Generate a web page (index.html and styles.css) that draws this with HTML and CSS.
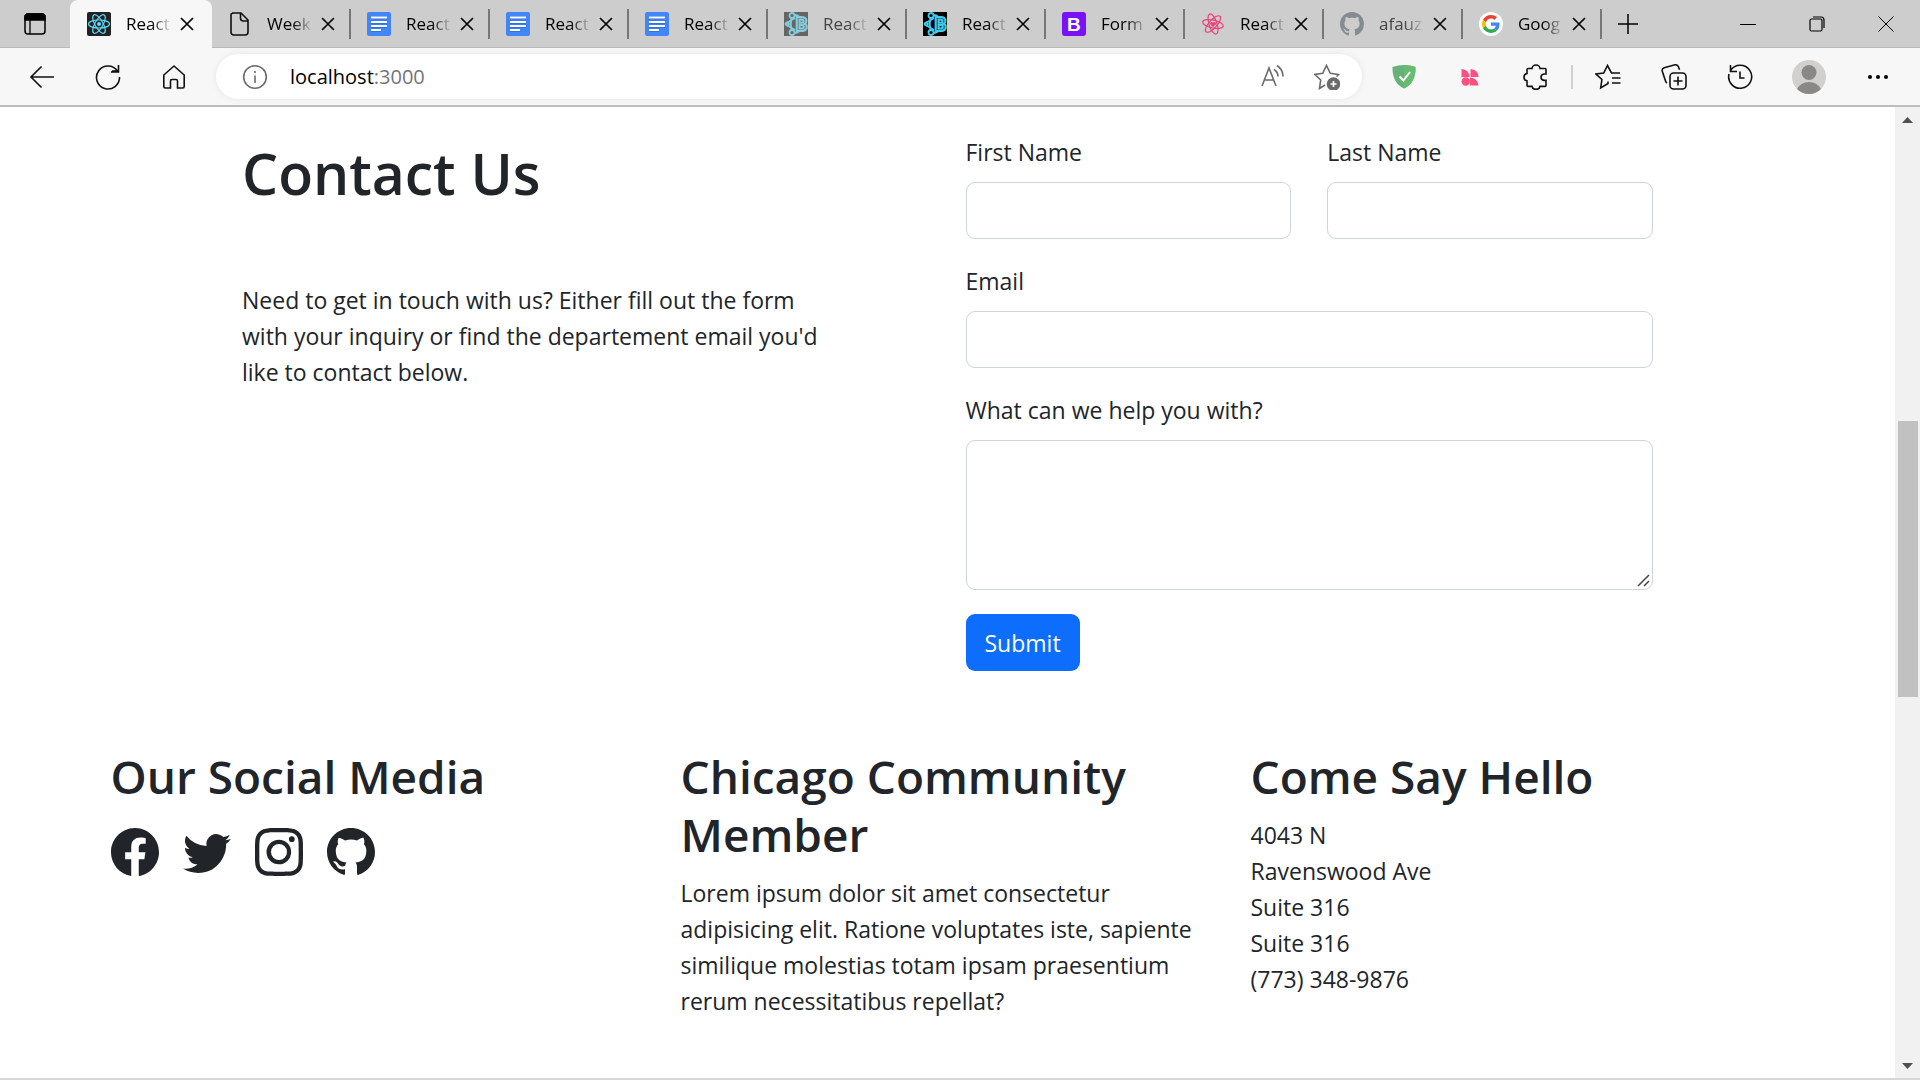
FILE: index.html
```html
<!DOCTYPE html>
<html lang="en">
<head>
<meta charset="utf-8">
<meta name="viewport" content="width=device-width, initial-scale=1">
<title>React App</title>
<link rel="stylesheet" href="styles.css">
</head>
<body>
<svg class="defs" aria-hidden="true">
  <symbol id="x" viewBox="0 0 14 14"><path d="M1 1l12 12M13 1L1 13" fill="none" stroke="currentColor" stroke-width="1.7"/></symbol>
  <symbol id="docs" viewBox="0 0 24 24"><rect width="24" height="24" rx="2" fill="#4285f4"/><path d="M4 5.7h16M4 10.2h16M4 14.200h16M4 18.200h10" stroke="#2a6be0" stroke-width="3"/><path d="M4 5.500h16M4 10h16M4 14h16M4 18h10" stroke="#fff" stroke-width="2.200"/></symbol>
  <symbol id="atom" viewBox="0 0 24 24"><g fill="none" stroke="currentColor" stroke-width="1.200"><ellipse cx="12" cy="12" rx="10.500" ry="4"/><ellipse cx="12" cy="12" rx="10.500" ry="4" transform="rotate(60 12 12)"/><ellipse cx="12" cy="12" rx="10.500" ry="4" transform="rotate(120 12 12)"/></g></symbol>
  <symbol id="rb" viewBox="0 0 24 24"><rect width="24" height="24"/><g fill="none" stroke="#41cbe8" stroke-width="1.800"><circle cx="3.500" cy="12" r="1.500"/><circle cx="8" cy="3.500" r="2.500"/><circle cx="8" cy="20.500" r="2.500"/><path d="M1 12L11 6M1 12l10 6M7.500 6c-1 4-1 8 0 12M10 3q4 0 5 2M10 21q4 0 5-2"/></g></symbol>
  <symbol id="github" viewBox="0 0 16 16"><path fill="currentColor" d="M8 0C3.580 0 0 3.580 0 8c0 3.540 2.290 6.530 5.470 7.590.4.070.550-.170.550-.380 0-.190-.010-.820-.010-1.490-2.010.370-2.530-.490-2.690-.940-.090-.230-.480-.940-.820-1.130-.280-.150-.680-.520-.010-.530.630-.010 1.080.580 1.230.820.720 1.210 1.870.870 2.330.660.070-.520.280-.870.510-1.070-1.780-.2-3.640-.890-3.640-3.950 0-.870.310-1.590.820-2.150-.080-.2-.360-1.020.080-2.120 0 0 .670-.210 2.200.820.640-.180 1.320-.270 2-.270s1.360.090 2 .270c1.530-1.040 2.200-.820 2.200-.820.440 1.100.160 1.920.080 2.120.510.560.820 1.270.820 2.150 0 3.070-1.870 3.750-3.650 3.950.290.250.540.730.540 1.480 0 1.070-.010 1.930-.010 2.200 0 .210.150.460.550.380A8.010 8.010 0 0 0 16 8c0-4.420-3.580-8-8-8z"/></symbol>
</svg>

<header class="browser">
  <div class="tabstrip">
    <button class="tab-actions" aria-label="Tab actions"><svg width="22" height="22" viewBox="0 0 22 22"><rect x="1" y="1" width="20" height="20" rx="3" fill="none" stroke="#000" stroke-width="1.500"/><path d="M1 7V4a3 3 0 0 1 3-3h14a3 3 0 0 1 3 3v3zM6 6v15" stroke="#000" stroke-width="1.300"/></svg></button>
    <nav class="tabs" aria-label="Open tabs">
      <div class="tab tab-active"><a href="#"><svg class="fav"><rect width="24" height="24" rx="2" fill="#222"/><use href="#atom" color="#61dafb"/><circle cx="12" cy="12" r="2" fill="#61dafb"/></svg><span>React</span></a><button aria-label="Close tab"><svg><use href="#x"/></svg></button></div>
      <div class="tab"><a href="#"><svg class="fav"><path d="M4 1h9l7 7v12q0 3-3 3H6q-3 0-3-3V3q0-2 3-2zM12.500 1v5q0 3 3 3H20" fill="none" stroke="#111" stroke-width="1.600"/></svg><span>Week</span></a><button aria-label="Close tab"><svg><use href="#x"/></svg></button></div>
      <div class="tab"><a href="#"><svg class="fav"><use href="#docs"/></svg><span>React</span></a><button aria-label="Close tab"><svg><use href="#x"/></svg></button></div>
      <div class="tab"><a href="#"><svg class="fav"><use href="#docs"/></svg><span>React</span></a><button aria-label="Close tab"><svg><use href="#x"/></svg></button></div>
      <div class="tab"><a href="#"><svg class="fav"><use href="#docs"/></svg><span>React</span></a><button aria-label="Close tab"><svg><use href="#x"/></svg></button></div>
      <div class="tab tab-sleep"><a href="#"><svg class="fav"><use href="#rb"/><text x="11" y="19" class="rb-letter">B</text></svg><span>React</span></a><button aria-label="Close tab"><svg><use href="#x"/></svg></button></div>
      <div class="tab"><a href="#"><svg class="fav"><use href="#rb"/><text x="11" y="19" class="rb-letter">B</text></svg><span>React</span></a><button aria-label="Close tab"><svg><use href="#x"/></svg></button></div>
      <div class="tab"><a href="#"><svg class="fav"><rect width="24" height="24" rx="3" fill="#7a12f8"/><text x="5" y="19" class="bs-letter">B</text></svg><span>Form</span></a><button aria-label="Close tab"><svg><use href="#x"/></svg></button></div>
      <div class="tab"><a href="#"><svg class="fav"><g transform="rotate(12 12 12)"><use href="#atom" color="#ec407a"/></g><path d="M12 15l-3-3q0-2 1.500-2T12 11q0-1 1.500-1T15 12z" fill="#ec407a"/></svg><span>React</span></a><button aria-label="Close tab"><svg><use href="#x"/></svg></button></div>
      <div class="tab tab-sleep"><a href="#"><svg class="fav fav-github"><use href="#github"/></svg><span>afauz</span></a><button aria-label="Close tab"><svg><use href="#x"/></svg></button></div>
      <div class="tab"><a href="#"><svg class="fav" viewBox="0 0 72 72"><circle cx="36" cy="36" r="36" fill="#fff"/><g transform="translate(9 9) scale(1.120)"><path fill="#ea4335" d="M24 9.500c3.540 0 6.710 1.220 9.210 3.600l6.850-6.850C35.900 2.380 30.470 0 24 0 14.620 0 6.510 5.380 2.560 13.220l7.980 6.190C12.430 13.720 17.740 9.500 24 9.500z"/><path fill="#4285f4" d="M46.980 24.550c0-1.570-.150-3.090-.380-4.550H24v9.020h12.940c-.580 2.960-2.260 5.480-4.780 7.180l7.730 6c4.510-4.180 7.090-10.360 7.090-17.650z"/><path fill="#fbbc05" d="M10.530 28.590c-.480-1.450-.760-2.990-.760-4.590s.270-3.140.760-4.590l-7.980-6.190C.920 16.460 0 20.120 0 24c0 3.880.920 7.540 2.560 10.780z"/><path fill="#34a853" d="M24 48c6.480 0 11.930-2.130 15.890-5.810l-7.730-6c-2.150 1.450-4.920 2.300-8.160 2.300-6.260 0-11.570-4.220-13.470-9.910l-7.980 6.190C6.510 42.620 14.620 48 24 48z"/></g></svg><span>Goog</span></a><button aria-label="Close tab"><svg><use href="#x"/></svg></button></div>
    </nav>
    <button class="new-tab" aria-label="New tab"><svg width="22" height="22" viewBox="0 0 22 22"><path d="M11 1v20M1 11h20" stroke="#000" stroke-width="1.500"/></svg></button>
    <div class="window-buttons">
      <button aria-label="Minimize"><svg width="16" height="16"><path d="M0 8.500h16" stroke="#000"/></svg></button>
      <button aria-label="Restore"><svg width="16" height="16" viewBox="0 0 16 16" fill="none" stroke="#000" stroke-width="1.200"><rect x="1" y="3" width="12" height="12" rx="1.500"/><path d="M4 1h8q3 0 3 3v8"/></svg></button>
      <button aria-label="Close window"><svg width="16" height="16"><path d="M.5.5l15 15M15.500.5l-15 15" stroke="#000"/></svg></button>
    </div>
  </div>

  <div class="toolbar">
    <button class="tool" aria-label="Back"><svg viewBox="0 0 26 26"><path d="M25 13H2M12.500 2.500L2 13l10.500 10.500"/></svg></button>
    <button class="tool" aria-label="Refresh"><svg viewBox="0 0 26 26"><path d="M24.500 13A11.500 11.500 0 1 1 22.500 7H17M23.500 1v7H16"/></svg></button>
    <button class="tool" aria-label="Home"><svg viewBox="0 0 26 26"><path d="M13 2L2.800 11v11.500q0 1.500 1.500 1.500H9.500v-7q0-1.500 1.500-1.500h4q1.500 0 1.500 1.500v7h5.200q1.500 0 1.500-1.500V11z"/></svg></button>
    <div class="omnibox">
      <button class="site-info" aria-label="Site information"><svg viewBox="0 0 26 26"><circle cx="13" cy="13" r="11.300"/><path d="M13 11.500v7.500M13 7v2"/></svg></button>
      <div class="url"><span>localhost</span>:3000</div>
      <button class="omni-tool" aria-label="Read aloud"><svg viewBox="0 0 26 26"><path d="M2 22L9 4l7 18M4.500 16h9M14 5.500q4 2.500 4 7M17 1.500q6 4 6 11"/></svg></button>
      <button class="omni-tool" aria-label="Add to favorites"><svg viewBox="0 0 26 26"><path d="M11 21l-5.500 3.500 1.200-8.500L1 10.500l7.700-1.200L12.500 1.500l3.800 7.800L24.500 10.500l-2 2"/><circle cx="19.500" cy="20" r="6" fill="#6b6b6b"/><path d="M19.500 17v6M16.500 20h6" stroke="#fff"/></svg></button>
    </div>
    <button class="tool" aria-label="AdGuard"><svg viewBox="0 0 26 26"><path d="M13 1q6 0 11.500 2 .5 16-11.500 21.500Q1 19 1.500 3 7 1 13 1z" fill="#67b279" stroke="none"/><path d="M13 1q6 0 11.500 2 .5 16-11.500 21.500z" fill="#68bc71" stroke="none"/><path d="M8.500 12.500l3.800 4L19 8" stroke="#fff" stroke-width="2"/></svg></button>
    <button class="tool" aria-label="Extension"><svg viewBox="0 0 26 26"><g fill="#ff4f81" stroke="none"><path d="M4.500 5q7.500.5 8 8h-8zM13.500 5q7.500.5 8 8h-8zM13 13.500q7.500.5 8.500 8H13z"/><circle cx="8.700" cy="17.500" r="4.200"/></g></svg></button>
    <button class="tool" aria-label="Extensions"><svg viewBox="0 0 26 26"><path d="M9 4.500a4 3.500 0 0 1 8 0h5q1 0 1 1V10h-2q-3 .5-3 3.200t3 3.200h2v5q0 1-1 1h-5q-.5 3-4 3t-4-3H5q-1 0-1-1v-4.500q-3-.5-3-3.700T4 9.500v-4q0-1 1-1z"/></svg></button>
    <span class="divider"></span>
    <button class="tool" aria-label="Favorites"><svg viewBox="0 0 26 26"><path d="M13 17.500v2L5.700 24l1.200-8.500L1 10l7.700-1L12.500 1.500 16.500 9H25M17 14h8.500M17 19h8.500"/></svg></button>
    <button class="tool" aria-label="Collections"><svg viewBox="0 0 26 26"><rect x="9" y="9" width="16" height="16" rx="3.500"/><path d="M17 12.500v9M12.500 17h9M6 19q-1-.5-1.500-2L1.200 7q-.5-2.500 2-3.200L14 .8q2.500-.300 3.500 2l1 3"/></svg></button>
    <button class="tool" aria-label="History"><svg viewBox="0 0 26 26"><path d="M2 10A11.500 11.500 0 1 0 3.500 6.500M3.500 1v6.500H10M13 7.500v6.500h4.500"/></svg></button>
    <button class="tool profile" aria-label="Profile"><svg class="avatar" viewBox="0 0 34 34"><circle cx="17" cy="17" r="17" fill="#d2d0ce"/><circle cx="17" cy="12.500" r="7.500" fill="#8a8886"/><path d="M5 29q4-7 12-7t12 7q-5 5-12 5T5 29z" fill="#8a8886"/></svg></button>
    <button class="tool" aria-label="Settings and more"><svg viewBox="0 0 26 26"><g fill="#000" stroke="none"><circle cx="5" cy="13" r="2"/><circle cx="13" cy="13" r="2"/><circle cx="21" cy="13" r="2"/></g></svg></button>
  </div>
</header>

<div class="viewport">
  <main class="page">
    <section class="contact">
      <div class="intro">
        <h1>Contact Us</h1>
        <p>Need to get in touch with us? Either fill out the form with your inquiry or find the departement email you'd like to contact below.</p>
      </div>
      <form class="form">
        <div class="field"><label for="first">First Name</label><input id="first" type="text"></div>
        <div class="field"><label for="last">Last Name</label><input id="last" type="text"></div>
        <div class="field wide"><label for="email">Email</label><input id="email" type="email"></div>
        <div class="field wide"><label for="message">What can we help you with?</label><textarea id="message"></textarea></div>
        <button class="submit" type="submit">Submit</button>
      </form>
    </section>

    <footer class="footer">
      <section>
        <h2>Our Social Media</h2>
        <div class="social">
          <a href="#" aria-label="Facebook"><svg viewBox="0 0 16 16"><path fill="currentColor" d="M16 8.049c0-4.446-3.582-8.050-8-8.050C3.580 0-.002 3.603-.002 8.050c0 4.017 2.926 7.347 6.750 7.951v-5.625h-2.030V8.050H6.750V6.275c0-2.017 1.195-3.131 3.022-3.131.876 0 1.791.157 1.791.157v1.980h-1.009c-.993 0-1.303.621-1.303 1.258v1.510h2.218l-.354 2.326H9.250V16c3.824-.604 6.750-3.934 6.750-7.951z"/></svg></a>
          <a href="#" aria-label="Twitter"><svg viewBox="0 0 16 16"><path fill="currentColor" d="M5.026 15c6.038 0 9.341-5.003 9.341-9.334 0-.140 0-.282-.006-.422A6.685 6.685 0 0 0 16 3.542a6.658 6.658 0 0 1-1.889.518 3.301 3.301 0 0 0 1.447-1.817 6.533 6.533 0 0 1-2.087.793A3.286 3.286 0 0 0 7.875 6.030a9.325 9.325 0 0 1-6.767-3.429 3.289 3.289 0 0 0 1.018 4.382A3.323 3.323 0 0 1 .640 6.575v.045a3.288 3.288 0 0 0 2.632 3.218 3.203 3.203 0 0 1-.865.115 3.230 3.230 0 0 1-.614-.057 3.283 3.283 0 0 0 3.067 2.277A6.588 6.588 0 0 1 .780 13.580a6.320 6.320 0 0 1-.780-.045A9.344 9.344 0 0 0 5.026 15z"/></svg></a>
          <a href="#" aria-label="Instagram"><svg viewBox="0 0 16 16"><path fill="currentColor" d="M8 0C5.829 0 5.556.010 4.703.048 3.850.088 3.269.222 2.760.420a3.917 3.917 0 0 0-1.417.923A3.927 3.927 0 0 0 .420 2.760C.222 3.268.087 3.850.048 4.700.010 5.555 0 5.827 0 8.001c0 2.172.010 2.444.048 3.297.040.852.174 1.433.372 1.942.205.526.478.972.923 1.417.444.445.890.719 1.416.923.510.198 1.090.333 1.942.372C5.555 15.990 5.827 16 8 16s2.444-.010 3.298-.048c.851-.040 1.434-.174 1.943-.372a3.916 3.916 0 0 0 1.416-.923c.445-.445.718-.891.923-1.417.197-.509.332-1.090.372-1.942C15.990 10.445 16 10.173 16 8s-.010-2.445-.048-3.299c-.040-.851-.175-1.433-.372-1.941a3.926 3.926 0 0 0-.923-1.417A3.911 3.911 0 0 0 13.240.420c-.510-.198-1.092-.333-1.943-.372C10.443.010 10.172 0 7.998 0h.003zm-.717 1.442h.718c2.136 0 2.389.007 3.232.046.780.035 1.204.166 1.486.275.373.145.640.319.920.599.280.280.453.546.598.920.110.281.240.705.275 1.485.039.843.047 1.096.047 3.231s-.008 2.389-.047 3.232c-.035.780-.166 1.203-.275 1.485a2.470 2.470 0 0 1-.599.919c-.280.280-.546.453-.920.598-.280.110-.704.240-1.485.276-.843.038-1.096.047-3.232.047s-2.390-.009-3.233-.047c-.780-.036-1.203-.166-1.485-.276a2.478 2.478 0 0 1-.920-.598 2.480 2.480 0 0 1-.600-.920c-.109-.281-.240-.705-.275-1.485-.038-.843-.046-1.096-.046-3.233 0-2.136.008-2.388.046-3.231.036-.780.166-1.204.276-1.486.145-.373.319-.640.599-.920.280-.280.546-.453.920-.598.282-.110.705-.240 1.485-.276.738-.034 1.024-.044 2.515-.045v.002zm4.988 1.328a.960.960 0 1 0 0 1.920.960.960 0 0 0 0-1.920zm-4.270 1.122a4.109 4.109 0 1 0 0 8.217 4.109 4.109 0 0 0 0-8.217zm0 1.441a2.667 2.667 0 1 1 0 5.334 2.667 2.667 0 0 1 0-5.334z"/></svg></a>
          <a href="#" aria-label="GitHub"><svg viewBox="0 0 16 16"><use href="#github"/></svg></a>
        </div>
      </section>
      <section>
        <h2>Chicago Community Member</h2>
        <p>Lorem ipsum dolor sit amet consectetur adipisicing elit. Ratione voluptates iste, sapiente similique molestias totam ipsam praesentium rerum necessitatibus repellat?</p>
      </section>
      <section>
        <h2>Come Say Hello</h2>
        <address>4043 N<br>Ravenswood Ave<br>Suite 316<br>Suite 316<br>(773) 348-9876</address>
      </section>
    </footer>
  </main>
  <div class="scrollbar" aria-hidden="true">
    <svg viewBox="0 0 25 25"><path d="M7 16h11l-5.500-6z"/></svg>
    <div class="track"><div class="thumb"></div></div>
    <svg viewBox="0 0 25 25"><path d="M7 10h11l-5.500 6z"/></svg>
  </div>
</div>
</body>
</html>
```
FILE: styles.css
```css
*,
*::before,
*::after {
  box-sizing: border-box;
}

body {
  margin: 0;
  min-height: 100vh;
  display: flex;
  flex-direction: column;
  background: #fff;
  border-bottom: 2px solid #d6d6d6;
  color: #212529;
  font-family: "Open Sans", "Noto Sans", sans-serif;
  font-size: 23px;
  line-height: 36px;
}

h1, h2, p {
  margin: 0;
  font-weight: 600;
}

p {
  font-weight: 400;
}

button {
  padding: 0;
  border: 0;
  background: none;
  color: inherit;
  font: inherit;
}

a {
  color: inherit;
  text-decoration: none;
}

svg {
  display: block;
}

.defs {
  position: absolute;
  width: 0;
  height: 0;
}

/* Browser chrome */

.browser {
  color: #000;
  background: #f7f7f7;
  border-bottom: 2px solid #bdbdbd;
}

.tabstrip {
  display: flex;
  height: 48px;
  background: #cdcdcd;
  box-shadow: inset 0 -1px #b8b8b8;
}

.tab-actions {
  width: 70px;
  display: grid;
  place-items: center;
}

.tabs {
  display: flex;
  flex: 0 1 1532px;
  min-width: 0;
}

.tab {
  display: flex;
  flex: 1;
  align-items: center;
  min-width: 0;
  padding: 0 16px;
  background: linear-gradient(#777, #777) right center / 2px 30px no-repeat;
  font-size: 17px;
}

.tab a {
  display: flex;
  flex: 1;
  gap: 15px;
  min-width: 0;
}

.tab span {
  flex: 1;
  white-space: nowrap;
  line-height: 24px;
  mask-image: linear-gradient(90deg, #000 55%, transparent);
}

.tab button {
  margin-left: 8px;
}

.tab button svg {
  width: 14px;
  height: 14px;
}

.tab-active {
  flex: 0 0 142px;
  padding: 0 18px 0 17px;
  background: #f7f7f7;
  border-radius: 8px 8px 0 0;
}

.tab-sleep .fav {
  opacity: 0.5;
}

.tab-sleep span {
  color: #444;
}

.fav {
  flex: none;
  width: 24px;
  height: 24px;
}

.tab .fav-github {
  color: #57606a;
  opacity: 0.6;
}

.rb-letter {
  font: 700 19px "Open Sans", sans-serif;
  fill: #0b2f38;
  stroke: #41cbe8;
  stroke-width: 2px;
}

.bs-letter {
  font: 700 19px "Liberation Sans", sans-serif;
  fill: #fff;
}

.new-tab {
  width: 52px;
  display: grid;
  place-items: center;
}

.window-buttons {
  display: flex;
  margin-left: auto;
}

.window-buttons button {
  width: 69px;
  display: grid;
  place-items: center;
}

.toolbar {
  display: flex;
  align-items: center;
  padding: 6px 9px;
  background: #f7f7f7;
}

.tool {
  width: 66px;
  display: grid;
  place-items: center;
}

.profile {
  width: 72px;
}

.tool svg,
.omnibox svg {
  width: 26px;
  height: 26px;
  fill: none;
  stroke: #111;
  stroke-width: 1.6;
}

.tool .avatar {
  width: 34px;
  height: 34px;
  stroke: none;
}

.divider {
  width: 2px;
  height: 24px;
  margin: 0 2px;
  background: #d0d0d0;
}

.omnibox {
  display: flex;
  flex: 1;
  align-items: center;
  height: 45px;
  margin: 0 9px;
  padding: 0 22px 0 26px;
  background: #fff;
  border-radius: 23px;
  box-shadow: 0 0 6px #e6e6e6;
}

.omnibox svg {
  stroke: #6b6b6b;
}

.url {
  flex: 1;
  padding-left: 22px;
  font-size: 20px;
  line-height: 44px;
  color: #757575;
}

.url span {
  color: #000;
}

.omni-tool {
  margin-left: 28px;
}

/* Web page */

.viewport {
  display: flex;
  flex: 1;
}

.page {
  flex: 1;
  min-width: 0;
  padding: 27px 24px 0;
}

.contact {
  display: grid;
  grid-template-columns: 1fr 1fr;
  gap: 36px;
  max-width: 1411px;
  margin: 0 auto;
}

.intro {
  padding: 3px 108px 0 0;
}

h1 {
  margin-bottom: 73px;
  font-size: 57px;
  line-height: 72px;
}

.form {
  display: grid;
  grid-template-columns: 1fr 1fr;
  gap: 24px 36px;
}

.field {
  display: flex;
  flex-direction: column;
  gap: 12px;
}

.wide {
  grid-column: 1 / -1;
}

input,
textarea {
  display: block;
  width: 100%;
  height: 57px;
  padding: 9px 18px;
  border: 1px solid #ced4da;
  border-radius: 9px;
  background: #fff;
  color: inherit;
  font: inherit;
}

textarea {
  height: 150px;
}

textarea::-webkit-resizer {
  background: url("data:image/svg+xml,%3Csvg xmlns='http://www.w3.org/2000/svg' width='15' height='15'%3E%3Cpath d='M1 12L12 1M7 12l5-5' stroke='%23444' stroke-width='1.5'/%3E%3C/svg%3E") no-repeat;
}

.submit {
  justify-self: start;
  height: 57px;
  padding: 0 19px;
  border-radius: 9px;
  background: #0d6efd;
  color: #fff;
}

.footer {
  display: grid;
  grid-template-columns: repeat(3, 1fr);
  gap: 36px;
  max-width: 1674px;
  margin: 76px auto 0;
}

h2 {
  margin-bottom: 12px;
  font-size: 46px;
  line-height: 58px;
}

.social {
  display: flex;
  gap: 24px;
  padding-top: 11px;
}

.social svg {
  width: 48px;
  height: 48px;
}

address {
  font-style: normal;
}

/* Scrollbar */

.scrollbar {
  display: flex;
  flex-direction: column;
  width: 25px;
  background: #f1f1f1;
}

.scrollbar svg {
  width: 25px;
  height: 25px;
  fill: #505050;
}

.track {
  display: flex;
  flex: 1;
  flex-direction: column;
  align-items: center;
}

.track::before {
  content: "";
  flex: 289;
}

.track::after {
  content: "";
  flex: 356;
}

.thumb {
  flex: 276;
  width: 20px;
  background: #c1c1c1;
}
```
